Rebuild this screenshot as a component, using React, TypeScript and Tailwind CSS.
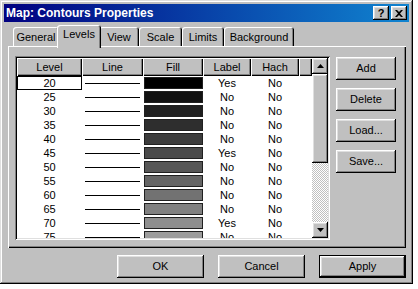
const levels = [
  { level: 20, fill: "#000000", label: "Yes" },
  { level: 25, fill: "#111111", label: "No" },
  { level: 30, fill: "#1f1f1f", label: "No" },
  { level: 35, fill: "#2e2e2e", label: "No" },
  { level: 40, fill: "#3c3c3c", label: "No" },
  { level: 45, fill: "#4a4a4a", label: "Yes" },
  { level: 50, fill: "#575757", label: "No" },
  { level: 55, fill: "#656565", label: "No" },
  { level: 60, fill: "#727272", label: "No" },
  { level: 65, fill: "#808080", label: "No" },
  { level: 70, fill: "#8e8e8e", label: "Yes" },
  { level: 75, fill: "#9c9c9c", label: "No" },
];

const tabs = [
  { name: "General", w: "w-[46px]" },
  { name: "Levels", w: "w-[44px]" },
  { name: "View", w: "w-[40px]" },
  { name: "Scale", w: "w-[43px]" },
  { name: "Limits", w: "w-[42px]" },
  { name: "Background", w: "w-[70px]" },
];

const raised =
  "shadow-[inset_-1px_-1px_#000,inset_1px_1px_#fff,inset_-2px_-2px_#808080,inset_2px_2px_#dfdfdf]";

function Btn({ label, className = "" }: { label: string; className?: string }) {
  return (
    <div className={`flex items-center justify-center bg-[#c0c0c0] ${raised} ${className}`}>
      {label}
    </div>
  );
}

function HeaderCell({ label, w }: { label: string; w: string }) {
  return (
    <div
      className={`${w} h-[18px] flex items-center justify-center bg-[#c0c0c0] shadow-[inset_1px_1px_#fff,inset_-1px_-1px_#000,inset_-2px_-2px_#808080]`}
    >
      {label}
    </div>
  );
}

export default function App() {
  return (
    <div className="w-[418px] h-[289px] bg-white font-['Liberation_Sans',Arial,sans-serif] text-[11px] text-black">
      <div className="w-[413px] h-[284px] bg-[#c0c0c0] p-[4px] flex flex-col shadow-[inset_-1px_-1px_#000,inset_1px_1px_#dfdfdf,inset_-2px_-2px_#808080,inset_2px_2px_#fff]">
        {/* Title bar */}
        <div className="h-[18px] flex items-center pl-[2px] pr-[2px] bg-[linear-gradient(to_right,#000080,#1084d0)]">
          <span className="text-white font-bold text-[12px] flex-1">Map: Contours Properties</span>
          <div className={`w-[16px] h-[14px] bg-[#c0c0c0] ${raised} flex items-center justify-center font-bold text-[11px] leading-none`}>
            ?
          </div>
          <div className={`ml-[2px] w-[16px] h-[14px] bg-[#c0c0c0] ${raised} flex items-center justify-center`}>
            <svg width="8" height="7" viewBox="0 0 8 7">
              <path d="M0 0h2l2 2 2-2h2L5 3.5 8 7H6L4 5 2 7H0l3-3.5z" fill="#000" />
            </svg>
          </div>
        </div>

        {/* Tabs */}
        <div className="mt-[3px] ml-[9px] h-[21px] flex items-end">
          {tabs.map((t) =>
            t.name === "Levels" ? (
              <div
                key={t.name}
                className={`${t.w} relative z-10 -mx-[2px] px-[2px] h-[23px] -mb-[2px] pb-[4px] bg-[#c0c0c0] rounded-t-[3px] flex items-center justify-center shadow-[inset_1px_1px_#fff,inset_-1px_0_#000,inset_-2px_0_#808080]`}
              >
                {t.name}
              </div>
            ) : (
              <div
                key={t.name}
                className={`${t.w} h-[19px] pt-[1px] bg-[#c0c0c0] rounded-t-[3px] flex items-center justify-center shadow-[inset_1px_1px_#fff,inset_-1px_0_#000,inset_-2px_0_#808080]`}
              >
                {t.name}
              </div>
            )
          )}
        </div>

        {/* Panel */}
        <div className="ml-[4px] w-[398px] h-[202px] flex shadow-[inset_1px_1px_#fff,inset_-1px_-1px_#000,inset_-2px_-2px_#808080]">
          {/* List */}
          <div className="ml-[7px] mt-[10px] w-[315px] h-[184px] p-[2px] bg-white flex shadow-[inset_1px_1px_#808080,inset_-1px_-1px_#fff,inset_2px_2px_#000,inset_-2px_-2px_#dfdfdf]">
            <div className="w-[295px] flex flex-col overflow-hidden">
              <div className="flex">
                <HeaderCell label="Level" w="w-[65px]" />
                <HeaderCell label="Line" w="w-[61px]" />
                <HeaderCell label="Fill" w="w-[60px]" />
                <HeaderCell label="Label" w="w-[48px]" />
                <HeaderCell label="Hach" w="w-[48px]" />
                <HeaderCell label="" w="w-[13px]" />
              </div>
              <div className="flex-1 overflow-hidden">
                {levels.map((r, i) => (
                  <div key={r.level} className="flex h-[14px] leading-[14px]">
                    <div
                      className={`w-[65px] text-center ${i === 0 ? "border border-black leading-[12px]" : ""}`}
                    >
                      {r.level}
                    </div>
                    <div className="w-[61px] flex items-center">
                      <div className="ml-[3px] w-[55px] h-px bg-black" />
                    </div>
                    <div className="w-[60px] flex items-center pl-[1px]">
                      <div className="w-[59px] h-[12px] border border-[#202020]" style={{ backgroundColor: r.fill }} />
                    </div>
                    <div className="w-[48px] text-center">{r.label}</div>
                    <div className="w-[48px] text-center">No</div>
                  </div>
                ))}
              </div>
            </div>
            {/* Scrollbar */}
            <div className="w-[16px] flex flex-col">
              <div className={`h-[16px] bg-[#c0c0c0] ${raised} flex items-center justify-center`}>
                <svg width="7" height="4" viewBox="0 0 7 4">
                  <path d="M3.5 0L7 4H0z" fill="#000" />
                </svg>
              </div>
              <div className={`h-[89px] bg-[#c0c0c0] ${raised}`} />
              <div className="flex-1 bg-[repeating-conic-gradient(#c0c0c0_0_25%,#fff_0_50%)] bg-[length:2px_2px]" />
              <div className={`h-[16px] bg-[#c0c0c0] ${raised} flex items-center justify-center`}>
                <svg width="7" height="4" viewBox="0 0 7 4">
                  <path d="M0 0h7L3.5 4z" fill="#000" />
                </svg>
              </div>
            </div>
          </div>

          {/* Side buttons */}
          <div className="ml-[6px] mt-[11px] flex flex-col gap-[8px]">
            <Btn label="Add" className="w-[60px] h-[23px]" />
            <Btn label="Delete" className="w-[60px] h-[23px]" />
            <Btn label="Load..." className="w-[60px] h-[23px]" />
            <Btn label="Save..." className="w-[60px] h-[23px]" />
          </div>
        </div>

        {/* Bottom buttons */}
        <div className="mt-[7px] ml-[113px] flex gap-[14px]">
          <Btn label="OK" className="w-[87px] h-[23px]" />
          <Btn label="Cancel" className="w-[87px] h-[23px]" />
          <div className="w-[87px] h-[23px] border border-black">
            <Btn label="Apply" className="w-full h-full" />
          </div>
        </div>
      </div>
    </div>
  );
}
